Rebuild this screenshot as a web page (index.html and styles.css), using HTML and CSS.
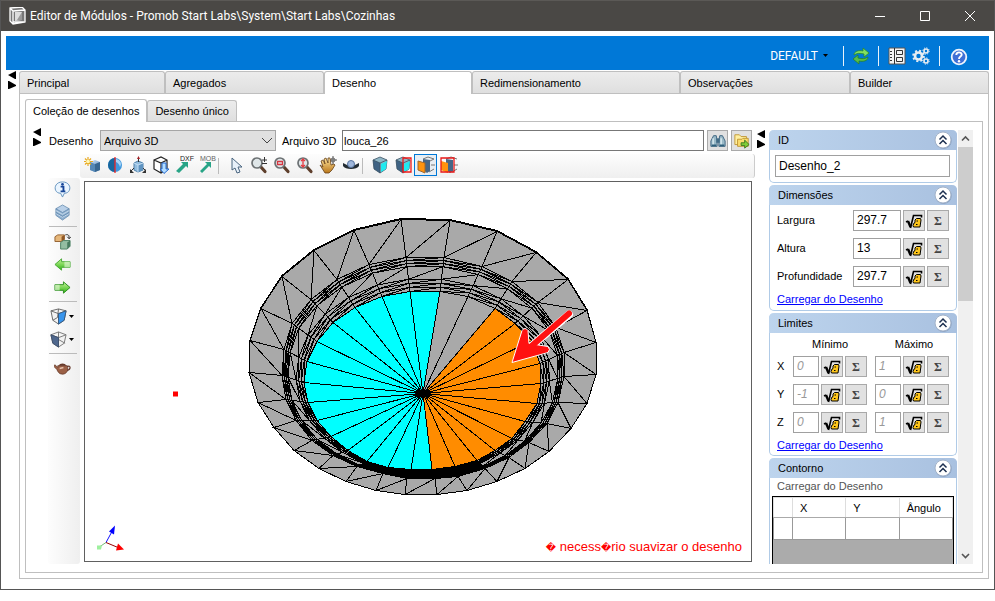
FILE: index.html
```html
<!DOCTYPE html>
<html lang="pt-BR">
<head>
<meta charset="utf-8">
<title>Editor de Módulos</title>
<link rel="stylesheet" href="styles.css">
</head>
<body>
<svg class="sprite" aria-hidden="true">
  <defs>
    <linearGradient id="gBlue" x1="0" y1="0" x2="1" y2="1"><stop offset="0" stop-color="#d3e6f8"/><stop offset="1" stop-color="#4c82ba"/></linearGradient>
    <linearGradient id="gGreen" x1="0" y1="0" x2="0" y2="1"><stop offset="0" stop-color="#c8f79a"/><stop offset="1" stop-color="#2fb414"/></linearGradient>
    <linearGradient id="gHand" x1="0" y1="0" x2="0" y2="1"><stop offset="0" stop-color="#ffe39a"/><stop offset="1" stop-color="#b9761a"/></linearGradient>
  </defs>
  <symbol id="arrows" viewBox="0 0 8 18"><path d="M8 0v8H7L0 4zM0 10h1l7 4v1l-7 3H0z"/></symbol>
  <symbol id="root" viewBox="0 0 18 16">
    <path d="M1 9l2-1" stroke="#000" stroke-width="1.500"/><path d="M3 8l2.500 6" stroke="#000" stroke-width="2.400"/>
    <path d="M5.500 15L8.500 2.500H16.500V4.500" fill="none" stroke="#000" stroke-width="1.600"/>
    <path d="M10 7l1.500-1.500h4L16 7l-1 7H8.500L8 12.500 9 10l1-.5z" fill="#ffc61a" stroke="#000"/>
    <path d="M11.500 8h1.500M11 11.500h1.500" stroke="#000"/>
  </symbol>
  <symbol id="chev" viewBox="0 0 18 18">
    <circle cx="9.500" cy="9.800" r="8.200" fill="#7189ab" opacity=".6"/><circle cx="9" cy="9" r="8" fill="#fff" stroke="#a3b3c9"/>
    <path d="M5.500 8.500L9 5l3.500 3.500M5.500 13L9 9.500l3.500 3.500" fill="none" stroke="#1d3050" stroke-width="1.500"/>
  </symbol>
  <symbol id="lens" viewBox="0 0 18 18">
    <path d="M10 10l5 5.500" stroke="#5e3f2c" stroke-width="3.200" stroke-linecap="round"/>
    <circle cx="7" cy="7" r="5" fill="#dfe6e8" stroke="#6c7173" stroke-width="1.700"/>
  </symbol>
  <symbol id="cube" viewBox="0 0 18 18">
    <path d="M9 1l7 3-1 9-6 4-6-4-1-9z" fill="#8fb6c6"/><path d="M2 4l7 3v10l-6-4z" fill="#3f6384"/>
    <path d="M2 4l7-3 7 3-1 9-6 4-6-4zM2 4l7 3 7-3M9 7v10" fill="none" stroke="#3b5263" stroke-width=".8"/>
  </symbol>
</svg>

<div class="window">
  <header class="titlebar">
    <svg class="i18" viewBox="0 0 18 18"><path d="M1 1l12-1 3 3v13l-12 1-3-3z" fill="#777"/><path d="M1 1l3 3v13M4 4l12-1M4 15l11 0M1 1l12-1 3 3v12l-12 2-3-3z" fill="none" stroke="#fff" stroke-width="1.300"/><path d="M6 5h7v8l-7 1z" fill="#ddd"/><path d="M13 5v8H8z" fill="#999"/></svg>
    <span class="title">Editor de Módulos - Promob Start Labs\System\Start Labs\Cozinhas</span>
    <button class="cap" aria-label="Minimizar"><svg viewBox="0 0 12 12"><path d="M1 6.500h10" /></svg></button>
    <button class="cap" aria-label="Maximizar"><svg viewBox="0 0 12 12"><path d="M1.500 1.500h9v9h-9z"/></svg></button>
    <button class="cap" aria-label="Fechar"><svg viewBox="0 0 12 12"><path d="M1 1l10 10M11 1L1 11"/></svg></button>
  </header>

  <nav class="bluebar">
    <button class="profile">DEFAULT <span class="caret"></span></button>
    <i class="bar"></i>
    <button class="tool" aria-label="Atualizar"><svg class="i18" viewBox="0 0 18 18"><path d="M2 8c0-4 5-5 9-4V1l6 5-5 4V7C8 6 5 6 2 8z" fill="#82df61" stroke="#2b8a2b" stroke-width=".8"/><path d="M16 10c0 4-5 5-9 4v3l-6-5 5-4v3c4 1 7 1 10-1z" fill="#58bd48" stroke="#24802c" stroke-width=".8"/></svg></button>
    <i class="bar"></i>
    <button class="tool snug" aria-label="Propriedades"><svg class="i18" viewBox="0 0 18 18"><path d="M1 1h16v16H1z" fill="#f4f4f4" stroke="#555"/><path d="M6.500 1v16M2 4.500h2M2 7.500h2M2 10.500h2M2 13.500h2M8.500 3.500h6v4h-6zM8.500 10.500h6v4h-6z" fill="none" stroke="#333"/></svg></button>
    <button class="tool" aria-label="Configurações"><svg class="i18" viewBox="0 0 18 18" fill="none" stroke="#e8edf2"><circle cx="6.500" cy="9" r="3.500" stroke-width="2.600"/><circle cx="6.500" cy="9" r="5.300" stroke-width="2" stroke-dasharray="2 2.160"/><circle cx="14" cy="4" r="2" stroke-width="1.600"/><circle cx="14" cy="4" r="3.200" stroke-dasharray="1.200 1.300"/><circle cx="14" cy="14" r="2" stroke-width="1.600"/><circle cx="14" cy="14" r="3.200" stroke-dasharray="1.200 1.300"/></svg></button>
    <i class="bar"></i>
    <button class="tool help" aria-label="Ajuda"><svg class="i18" viewBox="0 0 18 18"><circle cx="9" cy="9" r="7.300" fill="#3f6fd6" stroke="#eef3fc" stroke-width="1.800"/><path d="M6.300 7c0-3.600 5.600-3.400 5.400-.3C11.600 8.600 9 8.600 9 11" fill="none" stroke="#fff" stroke-width="1.900"/><circle cx="9" cy="13.300" r="1.200" fill="#fff"/></svg></button>
  </nav>

  <main class="workspace">
    <svg class="arrows"><use href="#arrows"/></svg>
    <div class="book">
      <div class="maintabs" role="tablist">
        <button role="tab">Principal</button><button role="tab">Agregados</button><button role="tab" class="on">Desenho</button><button role="tab">Redimensionamento</button><button role="tab">Observações</button><button role="tab">Builder</button>
      </div>
      <div class="page">
        <div class="subtabs" role="tablist"><button role="tab" class="on">Coleção de desenhos</button><button role="tab">Desenho único</button></div>
        <div class="inner">
          <section class="editor">
            <div class="fields">
              <svg class="arrows"><use href="#arrows"/></svg>
              <label for="kind">Desenho</label>
              <span class="selectbox"><select id="kind"><option>Arquivo 3D</option></select><svg viewBox="0 0 10 6"><path d="M0 0l5 5 5-5" fill="none" stroke="#444"/></svg></span>
              <label for="file">Arquivo 3D</label>
              <input id="file" type="text" value="louca_26">
              <button class="sq" aria-label="Procurar"><svg class="i18" viewBox="0 0 18 18"><path d="M4 3h3l1 5v7H1V9zM11 3h3l3 6v6h-7V8z" fill="#9bbac8" stroke="#355e7b"/><path d="M7 6h4v5H7z" fill="#426c86"/><path d="M3.500 6v8M12.500 6v8" stroke="#e6f5f8" stroke-width="1.300"/><path d="M2 14h5M11 14h5" stroke="#2e607c" stroke-width="2"/></svg></button>
              <button class="sq" aria-label="Abrir pasta"><svg class="i18" viewBox="0 0 18 18"><path d="M1 2h5l2 2h6v9H1z" fill="#fff0a0" stroke="#bd9330"/><path d="M4 7h5l1-1h6v9H4z" fill="#fbdc6d" stroke="#bd9330"/><path d="M8 11h4V8l5 5-5 4v-3H8z" fill="#82ce38" stroke="#35741c"/></svg></button>
            </div>
            <div class="toolbar">
              <button aria-label="Novo"><svg viewBox="0 0 18 18"><path d="M7 6l5-2 5 2v8l-5 2-5-2z" fill="url(#gBlue)"/><path d="M7 6l5 2v8l-5-2z" fill="#5588b6"/><path d="M12 8l5-2v8l-5 2z" fill="#376791"/><path d="M5 1v9M1 5.500h9M2 2.500l6 6M8 2.500l-6 6" stroke="#e8aa22" stroke-width="1.200"/><circle cx="5" cy="5.500" r="1.800" fill="#fff8b8"/></svg></button>
              <button aria-label="Espelhar"><svg viewBox="0 0 18 18"><circle cx="9" cy="9" r="7" fill="#3f97dd"/><path d="M10 3c5 1 6 5 4 8-1-3-2-4-4-5z" fill="#a9d6f7"/><path d="M9 2a7 7 0 0 0 0 14z" fill="#17669e"/><path d="M9 1v16" stroke="#ef2525" stroke-width="1.300"/></svg></button>
              <button aria-label="Eixos"><svg viewBox="0 0 18 18"><path d="M5 7l4-2 5 2v7l-5 2-4-2z" fill="#92bddf" stroke="#4c7fa9"/><path d="M9 9l5-2v7l-5 2z" fill="#5f93c0"/><path d="M5 7l4 2 5-2M9 9v7" fill="none" stroke="#c4def4"/><path d="M9.500 6V2M5 12l-3 3M14 12l3 3" stroke="#333"/><path d="M8 3l1.500-3L11 3z" fill="#a21c22"/><path d="M1 13v4h4zM17 13v4h-4z" fill="#333"/></svg></button>
              <button aria-label="Importar"><svg viewBox="0 0 18 18"><path d="M2 4l7-3 6 3v9l-6 4-7-4zM2 4l7 3 6-3M9 7v10" fill="#fff" stroke="#222" stroke-width="1.200"/><path d="M10 7h4v6h3l-5 4.500L8 13h2z" fill="#b2ddff" stroke="#246ad2"/></svg></button>
              <button aria-label="Exportar DXF"><svg viewBox="0 0 18 18"><text x="5" y="5" font-size="7" fill="#222">DXF</text><path d="M1 15l7-7-2-2h7v6l-2-2-7 7z" fill="#28a486"/></svg></button>
              <button aria-label="Exportar MOB"><svg viewBox="0 0 18 18"><text x="2" y="5" font-size="7" fill="#666">MOB</text><path d="M2 15l7-7-2-2h6v6l-2-2-7 7z" fill="#28a486"/></svg></button>
              <i></i>
              <button aria-label="Selecionar"><svg viewBox="0 0 18 18"><path d="M5 2v12l3-2 2 5 3-1-2-5h4z" fill="#e7f0f9" stroke="#49647f"/></svg></button>
              <button aria-label="Zoom"><svg viewBox="0 0 18 18"><use href="#lens"/><path d="M12 4h5M14.500 1v5M12 7.500h5" stroke="#333"/></svg></button>
              <button aria-label="Zoom janela"><svg viewBox="0 0 18 18"><use href="#lens"/><path d="M4.500 5.500h5v3h-5z" fill="none" stroke="#d53640" stroke-width="1.300"/></svg></button>
              <button aria-label="Zoom total"><svg viewBox="0 0 18 18"><use href="#lens"/><path d="M7 3v8M5 5l2-2 2 2M5 9l2 2 2-2" fill="none" stroke="#e33a40" stroke-width="1.300"/></svg></button>
              <button aria-label="Mover"><svg viewBox="0 0 18 18"><path d="M14 0v8M10 4h8" stroke="#555"/><circle cx="14" cy="4" r="2" fill="none" stroke="#666"/><path d="M1 9l3 2-2-6 2-1 2 4-1-5 2-1 2 5 0-5 2 0 1 7 3-1 1 1-3 5-3 3H6z" fill="url(#gHand)" stroke="#664018" stroke-width=".8"/></svg></button>
              <button aria-label="Orbitar"><svg viewBox="0 0 18 18"><path d="M1 7v3c2 4 14 4 16 0V7l-4 2H5z" fill="#242d34"/><circle cx="9" cy="8" r="3.500" fill="#9fb7dc" stroke="#57749f"/></svg></button>
              <i></i>
              <button aria-label="Face direita"><svg viewBox="0 0 18 18"><use href="#cube"/><path d="M10 8l6-3-1 8-5 3z" fill="#20eaf0"/></svg></button>
              <button aria-label="Selecionar face"><svg viewBox="0 0 18 18"><use href="#cube"/><path d="M10 8l6-3-1 8-5 3z" fill="#20eaf0"/><path d="M9 2h8v14H9z" fill="none" stroke="#f01818" stroke-width="1.300"/></svg></button>
              <button class="active" aria-label="Frente"><svg viewBox="0 0 18 18"><path d="M6 3l5-2 6 2M13 5l4-2M14 9h4M12 16l5-3" stroke="#777" fill="none"/><path d="M6 3l7 1v11l-3 2-4-3z" fill="#476685"/><path d="M1 5l7 2v10l-7-3z" fill="#ff930d" stroke="#9e662e"/></svg></button>
              <button aria-label="Selecionar frente"><svg viewBox="0 0 18 18"><path d="M6 3l5-2 6 2M14 9h4M12 16l5-3" stroke="#777" fill="none"/><path d="M6 3l7 1v11l-3 2-4-3z" fill="#476685"/><path d="M1 5l7 2v10l-7-3z" fill="#ff930d"/><path d="M1 2h13v14H1z" fill="none" stroke="#e91818" stroke-width="1.300"/></svg></button>
            </div>
            <div class="stage">
              <div class="sidebar">
                <button aria-label="Informações"><svg viewBox="0 0 18 18"><path d="M9 1c10 0 10 12 2 12l-2 4-2-4C-1 13-1 1 9 1z" fill="#eaf5ff" stroke="#6090bd"/><path d="M7 6h3v5m-3 0h5" fill="none" stroke="#164598" stroke-width="2"/><circle cx="9" cy="3.500" r="1.400" fill="#164598"/></svg></button>
                <button aria-label="Camadas"><svg viewBox="0 0 18 18" fill="#8fb0d0" stroke="#5f86ab" stroke-width=".8"><path d="M2 9v3l7 5 7-5V9z"/><path d="M2 10l7 4 7-4" fill="none" stroke="#d5e4f2"/><path d="M2 5v4l7 4 7-4V5z"/><path d="M2 7l7 4 7-4" fill="none" stroke="#d5e4f2"/><path d="M2 5l7-4 7 4-7 4z" fill="#b9d0e8"/></svg></button>
                <i></i>
                <button aria-label="Substituir"><svg viewBox="0 0 18 18"><path d="M1 4l3-2h7v5l-3 2H1z" fill="#e6b77a" stroke="#93602f"/><path d="M8 4l3-2v5L8 9z" fill="#8e5726"/><path d="M7 10l3-2h7v6l-3 3H7z" fill="#93bda2" stroke="#4b7f63"/><path d="M14 10l3-2v6l-3 3z" fill="#477a5f"/><path d="M12 2c4-1 4 1 4 4m-2-2l2 2 2-2" fill="none" stroke="#222"/></svg></button>
                <button aria-label="Anterior"><svg viewBox="0 0 18 18"><path d="M1 9l7-6v3h9v6H8v3z" fill="url(#gGreen)" stroke="#45a833"/><path d="M11 6v6h6V6z" fill="#e8f8dd" opacity=".6"/></svg></button>
                <button aria-label="Próximo"><svg viewBox="0 0 18 18"><path d="M17 9l-7-6v3H1v6h9v3z" fill="url(#gGreen)" stroke="#298d1e"/><path d="M1 6v6h5V6z" fill="#e8f8dd" opacity=".6"/></svg></button>
                <i></i>
                <button class="drop" aria-label="Vista frontal"><svg viewBox="0 0 18 18"><path d="M1 3l8-2 8 2-2 10-6 4-6-4zM1 3l8 3 8-3M9 6v11M9 1L8 10l-5 3" fill="#f2f2f2" stroke="#666"/><path d="M9 6l8-3-2 10-6 4z" fill="#3895ed" stroke="#36597f"/></svg><span class="caret"></span></button>
                <button class="drop" aria-label="Vista lateral"><svg viewBox="0 0 18 18"><path d="M1 4l8-3 8 3-2 9-6 4-6-4zM1 4l8 3 8-3M9 1v16M9 9l7 4" fill="#f2f2f2" stroke="#777"/><path d="M1 4l8 3v10l-6-4z" fill="#4f678d" stroke="#3e506c"/></svg><span class="caret"></span></button>
                <i></i>
                <button aria-label="Renderizar"><svg viewBox="0 0 18 18"><path d="M4 6h10c2 5-1 9-5 9S4 12 3 10L0 7l1-2 3 3z" fill="#9b6046" stroke="#643827" stroke-width=".8"/><path d="M14 7c4-2 4 3 0 4" fill="none" stroke="#64372a" stroke-width="1.300"/><path d="M5 6c1-3 7-3 8 0z" fill="#68392a"/><path d="M6 9l4-1" stroke="#e7c2ad" stroke-width="1.600"/></svg></button>
              </div>
              <div class="viewport">
                <svg viewBox="85 182 666 378" role="img" aria-label="Modelo 3D">
                  <g id="mesh"></g>
                  <path d="M569 314L532 345" stroke="#fff" stroke-width="8" stroke-linecap="round"/>
                  <path d="M512 362L522 330Q525 326 528 330L529 343L548 346Q551 349 548 352Z" fill="#f11" stroke="#fff" stroke-width="1"/>
                  <path d="M569 313L531 346" stroke="#f11" stroke-width="6" stroke-linecap="round"/>
                  <path d="M173 391h5v5h-5z" fill="#f00"/>
                  <path d="M106 542L112 531" stroke="#11f"/><path d="M109 531l6-6-1 9z" fill="#00f"/>
                  <path d="M106 542L118 547" stroke="#900"/><path d="M118 543l6 6-8 1z" fill="#f00"/>
                  <path d="M106 542L100 546" stroke="#7b7"/><path d="M97 545h5l-1 4h-4z" fill="#9ef09e"/>
                  <text class="warning" x="742" y="550"><tspan class="bad">&#xFFFD;</tspan> necess<tspan class="bad">&#xFFFD;</tspan>rio suavizar o desenho</text>
                </svg>
              </div>
            </div>
          </section>
          <svg class="arrows mid"><use href="#arrows"/></svg>
          <aside class="props">
            <section class="card"><h2>ID<button aria-label="Recolher ID"><svg><use href="#chev"/></svg></button></h2>
              <div class="idbody"><input type="text" aria-label="ID" value="Desenho_2"></div></section>
            <section class="card"><h2>Dimensões<button aria-label="Recolher Dimensões"><svg><use href="#chev"/></svg></button></h2>
              <div class="rows">
                <div class="dim"><label for="lg">Largura</label><input id="lg" type="text" value="297.7"><button class="sq" aria-label="Fórmula"><svg><use href="#root"/></svg></button><button class="sq sig">Σ</button></div>
                <div class="dim"><label for="al">Altura</label><input id="al" type="text" value="13"><button class="sq" aria-label="Fórmula"><svg><use href="#root"/></svg></button><button class="sq sig">Σ</button></div>
                <div class="dim"><label for="pr">Profundidade</label><input id="pr" type="text" value="297.7"><button class="sq" aria-label="Fórmula"><svg><use href="#root"/></svg></button><button class="sq sig">Σ</button></div>
                <a href="#">Carregar do Desenho</a>
              </div></section>
            <section class="card"><h2>Limites<button aria-label="Recolher Limites"><svg><use href="#chev"/></svg></button></h2>
              <div class="rows limits">
                <div class="minmax"><span>Mínimo</span><span>Máximo</span></div>
                <div class="lim"><span>X</span><input type="text" aria-label="X mínimo" value="0"><button class="sq" aria-label="Fórmula"><svg><use href="#root"/></svg></button><button class="sq sig">Σ</button><input class="max" type="text" aria-label="X máximo" value="1"><button class="sq" aria-label="Fórmula"><svg><use href="#root"/></svg></button><button class="sq sig">Σ</button></div>
                <div class="lim"><span>Y</span><input type="text" aria-label="Y mínimo" value="-1"><button class="sq" aria-label="Fórmula"><svg><use href="#root"/></svg></button><button class="sq sig">Σ</button><input class="max" type="text" aria-label="Y máximo" value="0"><button class="sq" aria-label="Fórmula"><svg><use href="#root"/></svg></button><button class="sq sig">Σ</button></div>
                <div class="lim"><span>Z</span><input type="text" aria-label="Z mínimo" value="0"><button class="sq" aria-label="Fórmula"><svg><use href="#root"/></svg></button><button class="sq sig">Σ</button><input class="max" type="text" aria-label="Z máximo" value="1"><button class="sq" aria-label="Fórmula"><svg><use href="#root"/></svg></button><button class="sq sig">Σ</button></div>
                <a href="#">Carregar do Desenho</a>
              </div></section>
            <section class="card last"><h2>Contorno<button aria-label="Recolher Contorno"><svg><use href="#chev"/></svg></button></h2>
              <p class="muted">Carregar do Desenho</p>
              <div class="gridbox"><table><thead><tr><th class="rowhead"></th><th>X</th><th>Y</th><th>Ângulo</th></tr></thead><tbody><tr><td></td><td></td><td></td><td></td></tr></tbody></table></div></section>
          </aside>
          <div class="scroll"><svg viewBox="0 0 15 17"><path d="M4 10.500l3.500-3.500 3.500 3.500" /></svg><div class="thumb"></div><svg class="down" viewBox="0 0 15 17"><path d="M4 7l3.500 3.500L11 7"/></svg></div>
        </div>
      </div>
    </div>
  </main>
</div>
<script src="mesh.js"></script>
</body>
</html>
```
FILE: styles.css
```css
* { box-sizing: border-box; }
body { margin: 0; background: #fff; color: #000; font: 11px/16px "Liberation Sans", Roboto, sans-serif; }
button, input, select { font: inherit; color: inherit; margin: 0; padding: 0; border: 0; border-radius: 0; background: none; }
svg { display: block; flex: none; }
.sprite { position: absolute; width: 0; height: 0; }
.i18 { width: 18px; height: 18px; }
.window { height: calc(100vh - 11px); min-height: 590px; display: flex; flex-direction: column; border: 1px solid #555; border-top: 0; background: #fff; }
.titlebar { flex: none; height: 31px; display: flex; align-items: center; background: #4a4845; color: #fff; border-top: 1px solid #5b5956; padding: 0 2px 0 8px; }
.title { flex: 1; font: 12px/16px Roboto, "Noto Sans", sans-serif; margin-left: 3px; }
.cap { width: 45px; height: 30px; display: grid; place-items: center; }
.cap svg { width: 12px; height: 12px; fill: none; stroke: #fff; }

.bluebar { flex: none; height: 34px; margin: 5px 5px 1px; background: #0078d7; display: flex; align-items: center; justify-content: flex-end; padding: 5px 18px 0 0; }
.profile { color: #fff; display: flex; align-items: center; gap: 5px; margin-right: 15px; font: 12px/16px Roboto, sans-serif; }
.caret { width: 5px; height: 3px; background: #000; clip-path: polygon(0 0, 100% 0, 50% 100%); }
.bar { width: 1px; height: 20px; background: #e8f2fa; }
.tool { width: 24px; height: 20px; display: grid; place-items: center; margin: 0 5px; }
.tool.snug { margin: 0 0 0 6px; }
.tool.snug + .tool { margin: 0 6px 0 0; }
.tool.help { margin: 3px 0 0 7px; }
.arrows { width: 8px; height: 18px; }

.workspace { flex: 1; min-height: 0; display: flex; gap: 3px; padding: 0 5px 10px 7px; }
.book { flex: 1; min-width: 0; display: flex; flex-direction: column; }
.maintabs { height: 22px; display: grid; grid-template-columns: 146fr 159fr 148fr 208fr 170fr 139fr; }
.maintabs button, .subtabs button { text-align: left; padding: 0 7px; border: 1px solid #bfbfbf; border-bottom: 0; border-radius: 3px 3px 0 0; background: linear-gradient(#ececec, #dfdfdf); white-space: nowrap; }
.maintabs .on, .subtabs .on { background: #fff; position: relative; margin-bottom: -1px; }
.page { flex: 1; min-height: 0; border: 1px solid #bfbfbf; padding: 5px; display: flex; flex-direction: column; }
.subtabs { height: 22px; display: flex; align-items: flex-end; flex: none; }
.subtabs button { height: 21px; }
.subtabs .on { height: 23px; }
.inner { flex: 1; min-height: 0; border: 1px solid #bfbfbf; display: flex; padding: 8px 9px 8px 7px; }
.editor { flex: 1; min-width: 0; display: flex; flex-direction: column; }
.fields { height: 21px; display: flex; align-items: center; padding-right: 3px; }
.fields .arrows { margin: -8px 8px 0 0; }
.fields label:nth-of-type(1) { width: 51px; }
.fields label:nth-of-type(2) { width: 60px; margin-left: 6px; }
.selectbox { width: 176px; position: relative; }
.selectbox select { display: block; width: 100%; height: 21px; appearance: none; border: 1px solid #a6a6a6; background: #e0e0e0; padding: 0 3px; }
.selectbox svg { position: absolute; right: 4px; top: 8px; width: 10px; height: 6px; pointer-events: none; }
input[type=text] { min-width: 0; height: 21px; border: 1px solid #a0a0a0; background: #fff; padding: 0 3px; font-size: 12px; }
.fields #file { flex: 1; border-color: #777; padding: 0 1px; font-size: 11px; }
.sq { flex: none; width: 22px; height: 21px; border: 1px solid #a9a9a9; background: #e1e1e1; display: grid; place-items: center; }
.sq svg { width: 18px; height: 16px; }
.fields .sq { margin-left: 3px; width: 21px; }

.toolbar { flex: none; height: 24px; margin: 3px 0 0 47px; display: flex; background: linear-gradient(#fdfdfd, #efefef); border-radius: 3px; border-right: 1px solid #ccc; }
.toolbar button { width: 23px; height: 22px; display: grid; place-items: center; }
.toolbar svg { width: 18px; height: 18px; overflow: visible; }
.toolbar i { width: 6px; height: 16px; margin-top: 4px; border-left: 1px solid #bbb; }
.toolbar .active { border: 1px solid #0078d7; background: #e8eef3; }
.stage { flex: 1; min-height: 0; display: flex; gap: 4px; padding-left: 15px; }
.sidebar { width: 32px; background: linear-gradient(90deg, #fdfdfd, #efefef); border-radius: 3px; }
.sidebar button { width: 100%; height: 23px; padding-left: 6px; display: flex; align-items: center; gap: 2px; }
.sidebar svg { width: 17px; height: 17px; }
.sidebar .drop { padding-left: 2px; }
.sidebar i { display: block; height: 4px; margin: 2px 3px 0 1px; border-top: 1px solid #bbb; }
.viewport { flex: 1; min-width: 0; margin: 3px 3px 2px 0; border: 1px solid #606060; background: #fff; }
.viewport svg { width: 100%; height: 100%; }
.warning { font: 13px "Liberation Sans", sans-serif; fill: #f00; text-anchor: end; }
.bad { font: 10px "DejaVu Sans", sans-serif; }
.arrows.mid { margin: 0 4px 0 2px; }

.props { width: 188px; flex: none; overflow: hidden; }
.card { border: 1px solid #b0cbe7; border-top: 0; border-radius: 5px; margin-bottom: 2px; background: #fff; }
.card h2 { margin: 0 -1px; height: 20px; padding: 0 5px 0 9px; font: inherit; display: flex; align-items: center; justify-content: space-between; background: linear-gradient(90deg, #bdd4ed, #a9c1e0); border-radius: 5px 5px 0 0; }
.card h2 button, .card h2 svg { width: 18px; height: 18px; }
.idbody { padding: 5px 6px 5px 5px; }
.idbody input { width: 100%; height: 22px; }
.rows { padding: 5px 6px 3px 7px; }
.dim, .lim { height: 28px; display: flex; align-items: flex-start; gap: 2px; line-height: 21px; }
.dim label { width: 74px; }
.dim input { width: 48px; }
.sig { font: bold 12px/16px "Liberation Serif", serif; color: #444; }
.rows a { display: block; color: #00f; text-decoration: underline; margin-top: -3px; height: 16px; }
.limits { padding-top: 3px; padding-bottom: 2px; }
.minmax { height: 20px; display: grid; grid-template-columns: 106px 1fr; text-align: center; }
.minmax span:last-child { padding-right: 12px; padding-left: 7px; }
.lim > span { width: 14px; }
.lim input { width: 26px; font-style: italic; color: #999; }
.lim .max { margin-left: 6px; }
.last { margin: 0; }
.muted { margin: 0; padding: 0 7px; height: 18px; color: #555; }
.gridbox { height: 400px; margin: 0 2px; border: 1px solid #000; background: #ababab; }
table { width: 100%; border-collapse: collapse; table-layout: fixed; background: #fff; }
th { height: 20px; padding: 0 7px; font-weight: normal; text-align: left; border: 1px solid #ddd; border-bottom-color: #aaa; }
.rowhead { width: 19px; }
td { height: 22px; border: 1px solid #999; }
.scroll { width: 15px; margin-left: 1px; background: #f0f0f0; display: flex; flex-direction: column; }
.scroll svg { width: 15px; height: 17px; fill: none; stroke: #555; stroke-width: 1.600px; }
.thumb { height: 154px; background: #cdcdcd; }
.scroll .down { margin-top: auto; }
```
FILE: mesh.js
```js
// Vertex rings of the basin, counter-clockwise from the top: rim, wall and bottom disc.
const rim = [[450,220],[401,219],[354,230],[314,250],[282,276],[261,308],[250,340],[249,372],[258,402],[274,427],[294,450],[319,468],[346,481],[376,490],[405,494],[437,494],[467,490],[497,481],[525,468],[549,451],[571,428],[587,403],[596,374],[596,342],[587,310],[568,279],[536,252],[497,231]];
const wall = [[444,257],[406,257],[369,264],[337,279],[311,299],[292,323],[284,349],[282,375],[286,399],[296,420],[312,440],[333,455],[357,466],[383,473],[407,478],[435,478],[458,476],[485,468],[509,457],[529,442],[547,423],[558,402],[564,376],[564,352],[556,327],[538,302],[512,281],[482,266]];
const disc = [[440,291],[410,291],[382,296],[355,307],[333,322],[317,341],[307,361],[304,382],[308,402],[317,420],[331,436],[348,450],[367,461],[388,467],[411,469],[432,469],[455,466],[477,460],[495,450],[512,438],[525,421],[537,403],[541,383],[540,363],[532,340],[515,323],[495,308],[468,296]];
const hub = [423, 393];
const count = rim.length;
const mesh = document.getElementById('mesh');

function add(tag, attributes) {
  const node = document.createElementNS('http://www.w3.org/2000/svg', tag);
  for (const key in attributes) node.setAttribute(key, attributes[key]);
  mesh.appendChild(node);
}
function blend(t) {
  return wall.map((p, i) => [p[0] + (disc[i][0] - p[0]) * t, p[1] + (disc[i][1] - p[1]) * t]);
}
function polygon(points, fill) {
  add('polygon', { points: points.join(' '), fill, stroke: '#000', 'shape-rendering': 'crispEdges' });
}
function strips(outer, inner) {
  let d = '';
  for (let i = 0; i < count; i++) {
    d += `M${inner[i]}L${outer[i]}L${inner[(i + 1) % count]}`;
  }
  add('path', { d, fill: 'none', stroke: '#000', 'shape-rendering': 'crispEdges' });
}

polygon(rim, '#a9a9a9');
polygon(rim.map(([x, y]) => [x, y + (y < 340 ? -1 : 0)]), 'none');
strips(rim, wall);
const steps = [0, 0.09, 0.18, 0.27, 0.64, 0.76, 0.88, 1];
const rings = steps.map(blend);
rings.forEach(ring => polygon(ring, 'none'));
for (let i = 0; i < rings.length - 1; i++) strips(rings[i], rings[i + 1]);
// The near side of the wall folds into a solid dark band.
polygon([...wall.slice(12, 18), ...disc.slice(12, 18).reverse()], '#000');
for (let i = 0; i < count; i++) {
  const fill = i < 15 ? '#00ffff' : i < 26 ? '#ff8c00' : '#a9a9a9';
  polygon([hub, disc[i], disc[(i + 1) % count]], fill);
}
add('ellipse', { cx: 423, cy: 393, rx: 8, ry: 4 });
```
